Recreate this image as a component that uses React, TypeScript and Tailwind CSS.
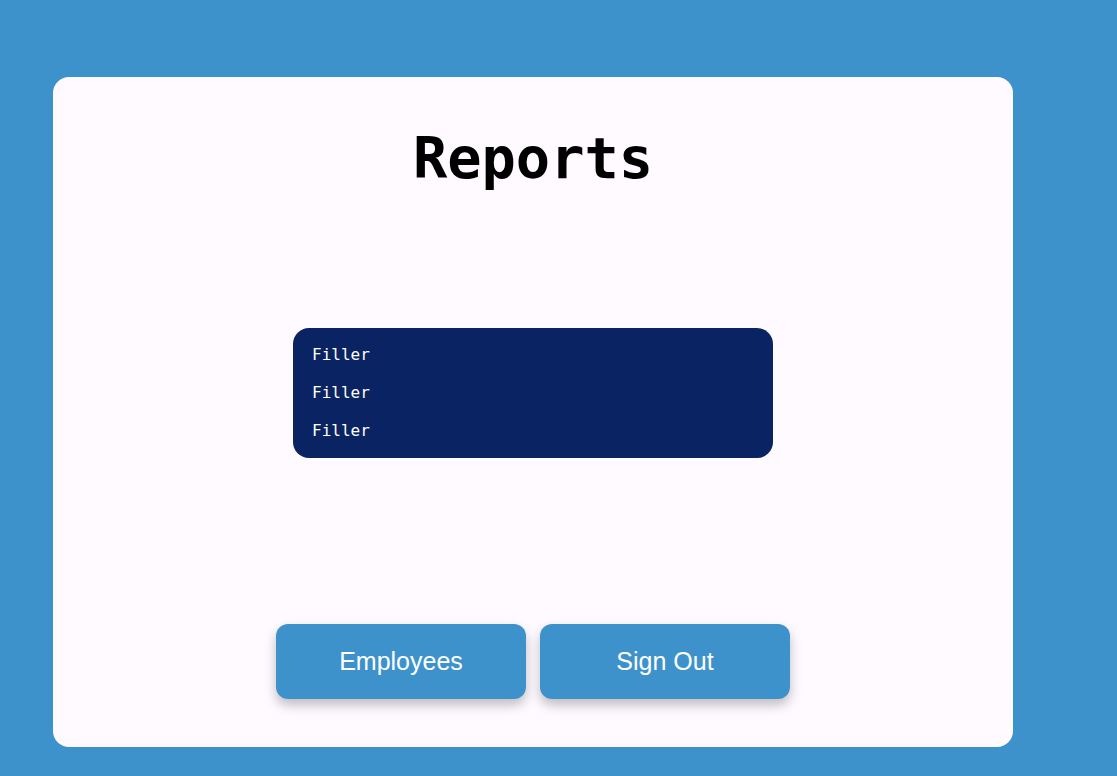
export default function App() {
  const items = ['Filler', 'Filler', 'Filler'];

  return (
    <div className="min-h-[776px] w-full bg-[#3e92cc] pt-[77px] pl-[53px]">
      {/* Main card */}
      <div className="flex h-[670px] w-[960px] flex-col items-center rounded-2xl bg-[#fffaff]">
        <h1 className="mt-[46px] font-['DejaVu_Sans_Mono',monospace] text-[57px] font-bold leading-[70px] text-black">
          Reports
        </h1>

        {/* Report list */}
        <div className="mt-[135px] flex h-[130px] w-[480px] flex-col rounded-2xl bg-[#0a2463] py-2 pl-[19px]">
          {items.map((item, i) => (
            <p key={i} className="font-['DejaVu_Sans_Mono',monospace] text-[16px] leading-[38px] text-white">
              {item}
            </p>
          ))}
        </div>

        <div className="mt-[166px] flex gap-[14px]">
          <button className="h-[75px] w-[250px] rounded-xl bg-[#3e92cc] font-['Liberation_Sans',Arial,sans-serif] text-[25px] text-white shadow-[0_6px_12px_rgba(0,0,0,0.25)]">
            Employees
          </button>
          <button className="h-[75px] w-[250px] rounded-xl bg-[#3e92cc] font-['Liberation_Sans',Arial,sans-serif] text-[25px] text-white shadow-[0_6px_12px_rgba(0,0,0,0.25)]">
            Sign Out
          </button>
        </div>
      </div>
    </div>
  );
}
